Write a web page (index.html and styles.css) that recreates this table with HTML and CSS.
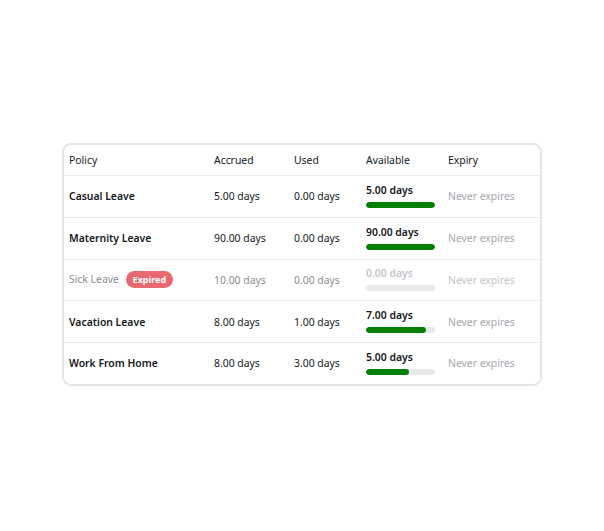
FILE: index.html
```html
<!DOCTYPE html>
<html>
<head>
<meta charset="utf-8">
<link rel="stylesheet" href="styles.css">
</head>
<body>
<div class="card">
  <div class="row head">
    <div class="c c1">Policy</div>
    <div class="c c2">Accrued</div>
    <div class="c c3">Used</div>
    <div class="c c4">Available</div>
    <div class="c c5">Expiry</div>
  </div>
  <div class="row">
    <div class="c c1 name">Casual Leave</div>
    <div class="c c2">5.00 days</div>
    <div class="c c3">0.00 days</div>
    <div class="c c4"><div class="avail">5.00 days</div><div class="track"><div class="fill" style="width:100%"></div></div></div>
    <div class="c c5 muted">Never expires</div>
  </div>
  <div class="row">
    <div class="c c1 name">Maternity Leave</div>
    <div class="c c2">90.00 days</div>
    <div class="c c3">0.00 days</div>
    <div class="c c4"><div class="avail">90.00 days</div><div class="track"><div class="fill" style="width:100%"></div></div></div>
    <div class="c c5 muted">Never expires</div>
  </div>
  <div class="row expired">
    <div class="c c1 name">Sick Leave <span class="badge">Expired</span></div>
    <div class="c c2">10.00 days</div>
    <div class="c c3">0.00 days</div>
    <div class="c c4"><div class="avail">0.00 days</div><div class="track"><div class="fill" style="width:0%"></div></div></div>
    <div class="c c5 muted">Never expires</div>
  </div>
  <div class="row">
    <div class="c c1 name">Vacation Leave</div>
    <div class="c c2">8.00 days</div>
    <div class="c c3">1.00 days</div>
    <div class="c c4"><div class="avail">7.00 days</div><div class="track"><div class="fill" style="width:87.5%"></div></div></div>
    <div class="c c5 muted">Never expires</div>
  </div>
  <div class="row last">
    <div class="c c1 name">Work From Home</div>
    <div class="c c2">8.00 days</div>
    <div class="c c3">3.00 days</div>
    <div class="c c4"><div class="avail">5.00 days</div><div class="track"><div class="fill" style="width:62.5%"></div></div></div>
    <div class="c c5 muted">Never expires</div>
  </div>
</div>
</body>
</html>
```
FILE: styles.css
```css
html, body { margin: 0; padding: 0; background: #fff; }
body {
  font-family: "Noto Sans", "Open Sans", sans-serif;
  font-size: 10.4px;
  color: #15171a;
  padding: 143px 0 0 62px;
}
.card {
  width: 476px;
  border: 2px solid #e4e5e7;
  border-radius: 9px;
  overflow: hidden;
}
.row {
  display: grid;
  grid-template-columns: 145px 80px 72px 82px 1fr;
  height: 40.75px;
  align-items: center;
  border-bottom: 1px solid #ececee;
  padding-left: 5px;
}
.row.head { height: 30px; }
.row.last { border-bottom: none; }
.c { white-space: nowrap; }
.name { font-weight: 600; }
.muted { color: #a3a7ae; }
.avail { font-weight: 600; margin-top: -2px; }
.track {
  margin-top: 5px;
  width: 69px;
  height: 6px;
  border-radius: 3px;
  background: #e8e9eb;
  overflow: hidden;
}
.fill { height: 100%; background: #058005; border-radius: 3px; }
.expired .c { color: #8a8d92; }
.expired .name { font-weight: 400; }
.expired .avail { color: #c3c6cb; font-weight: 600; }
.expired .muted { color: #c2c5ca; }
.badge {
  display: inline-block;
  margin-left: 4px;
  padding: 2px 7px;
  border-radius: 9px;
  background: #e86a6f;
  color: #fff !important;
  font-size: 9px;
  font-weight: 700;
  line-height: 13px;
}
```
